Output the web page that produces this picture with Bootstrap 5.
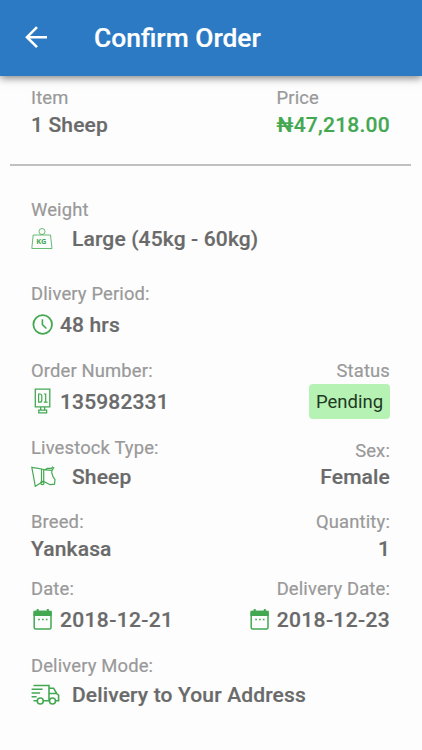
<!DOCTYPE html>
<html lang="en">
<head>
<meta charset="utf-8">
<meta name="viewport" content="width=device-width, initial-scale=1">
<title>Confirm Order</title>
<link href="https://cdn.jsdelivr.net/npm/bootstrap@5.3.0/dist/css/bootstrap.min.css" rel="stylesheet">
<style>
body{font-family:Roboto,"Noto Sans",sans-serif;background:#fdfdfd;color:#6a6a6a;min-height:750px;overflow:hidden}
.topbar{height:75.5px;background:#2b7ac3;box-shadow:0 2px 8px rgba(0,0,0,.5);padding-left:24px;gap:46px}
.topbar h1{font-size:26.4px;font-weight:500;line-height:30px;color:#fff;-webkit-text-stroke:.2px}
.order{padding:0 32px 0 31px}
.cap{font-size:18.4px;line-height:22px;color:#999;letter-spacing:.15px;-webkit-text-stroke:.2px}
.val{font-size:21px;line-height:24px;font-weight:500;letter-spacing:.15px;height:24px;white-space:nowrap;-webkit-text-stroke:.2px}
.date{letter-spacing:.35px}
.price{color:#43a851;letter-spacing:.25px}
.rule{height:2px;background:#c0c0c0;margin:27px 11px 0 10px}
.status{background:#b6f2b4;color:#1f3a22;font-size:18.5px;line-height:36px;height:35px;width:81px;margin-bottom:-5px;margin-top:2px}
.ic{color:#43a851;flex:none;fill:none;stroke:currentColor}
.near{gap:6px}.wide{gap:11px}
.g3{gap:3px}.g4{gap:4px}.g6{gap:6px}.g8{gap:8px}
.r1{margin-top:11.5px}.r2{margin-top:33px}.r3{margin-top:32px}.r4{margin-top:23px}.r5{margin-top:23px}.r6{margin-top:22px}.r7{margin-top:17px}.r8{margin-top:23px}
</style>
</head>
<body>
<header class="topbar d-flex align-items-center">
  <svg class="flex-shrink-0" width="24" height="24" viewBox="0 0 24 24" fill="none" stroke="#fff" stroke-width="2.6"><path d="M23 11.2H3.5M13 1.2 3 11.2l10 10"/></svg>
  <h1 class="m-0">Confirm Order</h1>
</header>
<main>
  <section class="order">
    <div class="r1 d-flex justify-content-between">
      <div class="d-flex flex-column g4"><div class="cap">Item</div><div class="val">1 Sheep</div></div>
      <div class="d-flex flex-column g4"><div class="cap">Price</div><div class="val price">₦47,218.00</div></div>
    </div>
  </section>
  <div class="rule"></div>
  <section class="order">
    <div class="r2 d-flex flex-column g6">
      <div class="cap">Weight</div>
      <div class="val d-flex align-items-center wide">
        <svg class="ic" width="30" height="24" viewBox="0 0 30 24" stroke-width=".8"><circle cx="11" cy="4.5" r="3"/><path d="M2.2 8h17.3l1.5 13.5H.8z"/><text x="5.2" y="17.3" font-family="Noto Sans" font-size="7.4" font-weight="700" letter-spacing="0" fill="currentColor" stroke="none">KG</text></svg>
        <span>Large (45kg - 60kg)</span>
      </div>
    </div>
    <div class="r3 d-flex flex-column g8">
      <div class="cap">Dlivery Period:</div>
      <div class="val d-flex align-items-center near">
        <svg class="ic" width="23" height="24" viewBox="0 0 23 24" stroke-width="1.8"><circle cx="11.7" cy="11.5" r="9.3"/><path d="M11.4 6.3v5.4l4 3.8" stroke-width="1.6"/></svg>
        <span>48 hrs</span>
      </div>
    </div>
    <div class="r4 d-flex justify-content-between align-items-end">
      <div class="d-flex flex-column g8">
        <div class="cap">Order Number:</div>
        <div class="val d-flex align-items-center near">
          <svg class="ic overflow-visible" width="23" height="24" viewBox="0 0 23 24" stroke-width="1.3"><path d="M4.3-.8h14.5v17.6H4.3zM9.7 16.8v3.4M13.6 16.8v3.4M7.8 20.2h7.8v2.7H7.8z"/><path d="M7 4h2q1.8 0 1.8 2v4.2q0 2-1.8 2H7M7.6 4v8.2M12.8 4h1.9v8.2M12.8 12.2h3.8" stroke-width="1.2"/></svg>
          <span>135982331</span>
        </div>
      </div>
      <div class="d-flex flex-column align-items-end"><div class="cap">Status</div><div class="status rounded-1 text-center">Pending</div></div>
    </div>
    <div class="r5 d-flex justify-content-between align-items-end">
      <div class="d-flex flex-column g6">
        <div class="cap">Livestock Type:</div>
        <div class="val d-flex align-items-center wide">
          <svg class="ic" width="30" height="24" viewBox="0 0 30 24" stroke-width="1.2"><path d="M.8 2.3 10.5 4v13.5L4.3 21.3zM10.5 4l3.7.8 2-1.4h4.2l1.6-1.8M14.2 4.8l6.8.6 2-3.2M21 5.4c-1.2 2.6 1 4 .8 6l2.2 3.3-.5 4.4-4.4.6-6-3-1.6.8M12.7 4.6v12.3"/><circle cx="11.4" cy="18" r="1.6"/></svg>
          <span>Sheep</span>
        </div>
      </div>
      <div class="d-flex flex-column align-items-end g3"><div class="cap">Sex:</div><div class="val">Female</div></div>
    </div>
    <div class="r6 d-flex justify-content-between">
      <div class="d-flex flex-column g4"><div class="cap">Breed:</div><div class="val">Yankasa</div></div>
      <div class="d-flex flex-column align-items-end g4"><div class="cap">Quantity:</div><div class="val">1</div></div>
    </div>
    <div class="r7 d-flex justify-content-between">
      <div class="d-flex flex-column g8">
        <div class="cap">Date:</div>
        <div class="val date d-flex align-items-center near">
          <svg class="ic" width="23" height="24" viewBox="0 0 23 24" stroke-width="1.5"><rect x="3.2" y="3.5" width="16.8" height="17.4" rx="1.5"/><path d="M3.2 3.5H20v3.8H3.2z" fill="currentColor"/><path d="M6.7 1v3M16.8 1v3" stroke-width="2"/><path d="M7.2 11.5h1.7M11 11.5h1.7M14.8 11.5h1.7" stroke-width="1.7"/></svg>
          <span>2018-12-21</span>
        </div>
      </div>
      <div class="d-flex flex-column align-items-end g8">
        <div class="cap">Delivery Date:</div>
        <div class="val date d-flex align-items-center near">
          <svg class="ic" width="23" height="24" viewBox="0 0 23 24" stroke-width="1.5"><rect x="3.2" y="3.5" width="16.8" height="17.4" rx="1.5"/><path d="M3.2 3.5H20v3.8H3.2z" fill="currentColor"/><path d="M6.7 1v3M16.8 1v3" stroke-width="2"/><path d="M7.2 11.5h1.7M11 11.5h1.7M14.8 11.5h1.7" stroke-width="1.7"/></svg>
          <span>2018-12-23</span>
        </div>
      </div>
    </div>
    <div class="r8 d-flex flex-column g6">
      <div class="cap">Delivery Mode:</div>
      <div class="val d-flex align-items-center wide">
        <svg class="ic" width="30" height="24" viewBox="0 0 30 24" stroke-width="1.6"><path d="M2.5 2.5H18V17M.6 6.2h11M.6 10h8.5M.6 13.8h5M2.5 17.8h3.8M12.3 17.8h6M18 5.2h4.6l3 5.3 2 1.7v5.6h-3M18 10.5h7.6"/><circle cx="9.3" cy="18" r="3"/><circle cx="21.5" cy="18" r="3"/></svg>
        <span>Delivery to Your Address</span>
      </div>
    </div>
  </section>
</main>
<script src="https://cdn.jsdelivr.net/npm/bootstrap@5.3.0/dist/js/bootstrap.bundle.min.js"></script>
</body>
</html>
